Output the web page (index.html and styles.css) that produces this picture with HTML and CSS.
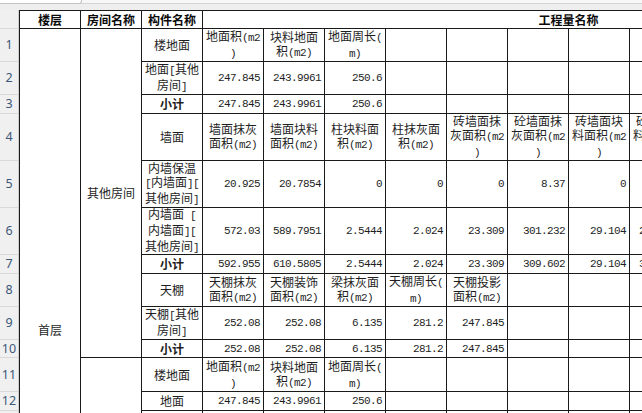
FILE: index.html
```html
<!DOCTYPE html>
<html lang="zh-CN">
<head>
<meta charset="utf-8">
<title>工程量表</title>
<link rel="stylesheet" href="styles.css">
</head>
<body>
<div class="topbar"><div class="strip"><div class="namebox"></div></div></div>
<div class="main">
  <div class="rowhead">
    <div class="rh h19"></div>
    <div class="rh h33">1</div>
    <div class="rh h33">2</div>
    <div class="rh h19">3</div>
    <div class="rh h47">4</div>
    <div class="rh h47">5</div>
    <div class="rh h47">6</div>
    <div class="rh h19">7</div>
    <div class="rh h33">8</div>
    <div class="rh h33">9</div>
    <div class="rh h18">10</div>
    <div class="rh h34">11</div>
    <div class="rh h19">12</div>
    <div class="rh h33"></div>
  </div>
  <div class="sheet">
    <div class="c hd">楼层</div>
    <div class="c hd">房间名称</div>
    <div class="c hd">构件名称</div>
    <div class="c hd span">工程量名称</div>

    <div class="c floor"><p>首层</p></div>
    <div class="c room"><p>其他房间</p></div>
    <div class="c room2"></div>

    <!-- row 1 -->
    <div class="c"><p>楼地面</p></div>
    <div class="c"><p>地面积<span class="a">(m2</span><br><span class="a">)</span></p></div>
    <div class="c"><p>块料地面<br>积<span class="a">(m2)</span></p></div>
    <div class="c"><p>地面周长<span class="a">(</span><br><span class="a">m)</span></p></div>
    <div class="c"></div><div class="c"></div><div class="c"></div><div class="c"></div><div class="c"></div><div class="c"></div>

    <!-- row 2 -->
    <div class="c"><p>地面<span class="a">[</span>其他<br>房间<span class="a">]</span></p></div>
    <div class="c n">247.845</div>
    <div class="c n">243.9961</div>
    <div class="c n">250.6</div>
    <div class="c"></div><div class="c"></div><div class="c"></div><div class="c"></div><div class="c"></div><div class="c"></div>

    <!-- row 3 -->
    <div class="c b"><p>小计</p></div>
    <div class="c n">247.845</div>
    <div class="c n">243.9961</div>
    <div class="c n">250.6</div>
    <div class="c"></div><div class="c"></div><div class="c"></div><div class="c"></div><div class="c"></div><div class="c"></div>

    <!-- row 4 -->
    <div class="c"><p>墙面</p></div>
    <div class="c"><p>墙面抹灰<br>面积<span class="a">(m2)</span></p></div>
    <div class="c"><p>墙面块料<br>面积<span class="a">(m2)</span></p></div>
    <div class="c"><p>柱块料面<br>积<span class="a">(m2)</span></p></div>
    <div class="c"><p>柱抹灰面<br>积<span class="a">(m2)</span></p></div>
    <div class="c"><p>砖墙面抹<br>灰面积<span class="a">(m2</span><br><span class="a">)</span></p></div>
    <div class="c"><p>砼墙面抹<br>灰面积<span class="a">(m2</span><br><span class="a">)</span></p></div>
    <div class="c"><p>砖墙面块<br>料面积<span class="a">(m2</span><br><span class="a">)</span></p></div>
    <div class="c"><p>砼墙面块<br>料面积<span class="a">(m2</span><br><span class="a">)</span></p></div>
    <div class="c"></div>

    <!-- row 5 -->
    <div class="c"><p>内墙保温<br><span class="a">[</span>内墙面<span class="a">][</span><br>其他房间<span class="a">]</span></p></div>
    <div class="c n">20.925</div>
    <div class="c n">20.7854</div>
    <div class="c n">0</div>
    <div class="c n">0</div>
    <div class="c n">0</div>
    <div class="c n">8.37</div>
    <div class="c n">0</div>
    <div class="c n">31.0442</div>
    <div class="c"></div>

    <!-- row 6 -->
    <div class="c"><p>内墙面<span class="a"> [</span><br>内墙面<span class="a">][</span><br>其他房间<span class="a">]</span></p></div>
    <div class="c n">572.03</div>
    <div class="c n">589.7951</div>
    <div class="c n">2.5444</div>
    <div class="c n">2.024</div>
    <div class="c n">23.309</div>
    <div class="c n">301.232</div>
    <div class="c n">29.104</div>
    <div class="c n">279.5135</div>
    <div class="c"></div>

    <!-- row 7 -->
    <div class="c b"><p>小计</p></div>
    <div class="c n">592.955</div>
    <div class="c n">610.5805</div>
    <div class="c n">2.5444</div>
    <div class="c n">2.024</div>
    <div class="c n">23.309</div>
    <div class="c n">309.602</div>
    <div class="c n">29.104</div>
    <div class="c n">310.5577</div>
    <div class="c"></div>

    <!-- row 8 -->
    <div class="c"><p>天棚</p></div>
    <div class="c"><p>天棚抹灰<br>面积<span class="a">(m2)</span></p></div>
    <div class="c"><p>天棚装饰<br>面积<span class="a">(m2)</span></p></div>
    <div class="c"><p>梁抹灰面<br>积<span class="a">(m2)</span></p></div>
    <div class="c"><p>天棚周长<span class="a">(</span><br><span class="a">m)</span></p></div>
    <div class="c"><p>天棚投影<br>面积<span class="a">(m2)</span></p></div>
    <div class="c"></div><div class="c"></div><div class="c"></div><div class="c"></div>

    <!-- row 9 -->
    <div class="c"><p>天棚<span class="a">[</span>其他<br>房间<span class="a">]</span></p></div>
    <div class="c n">252.08</div>
    <div class="c n">252.08</div>
    <div class="c n">6.135</div>
    <div class="c n">281.2</div>
    <div class="c n">247.845</div>
    <div class="c"></div><div class="c"></div><div class="c"></div><div class="c"></div>

    <!-- row 10 -->
    <div class="c b"><p>小计</p></div>
    <div class="c n">252.08</div>
    <div class="c n">252.08</div>
    <div class="c n">6.135</div>
    <div class="c n">281.2</div>
    <div class="c n">247.845</div>
    <div class="c"></div><div class="c"></div><div class="c"></div><div class="c"></div>

    <!-- row 11 -->
    <div class="c"><p>楼地面</p></div>
    <div class="c"><p>地面积<span class="a">(m2</span><br><span class="a">)</span></p></div>
    <div class="c"><p>块料地面<br>积<span class="a">(m2)</span></p></div>
    <div class="c"><p>地面周长<span class="a">(</span><br><span class="a">m)</span></p></div>
    <div class="c"></div><div class="c"></div><div class="c"></div><div class="c"></div><div class="c"></div><div class="c"></div>

    <!-- row 12 -->
    <div class="c"><p>地面</p></div>
    <div class="c n">247.845</div>
    <div class="c n">243.9961</div>
    <div class="c n">250.6</div>
    <div class="c"></div><div class="c"></div><div class="c"></div><div class="c"></div><div class="c"></div><div class="c"></div>

    <!-- row 13 -->
    <div class="c"></div>
    <div class="c"></div>
    <div class="c"></div>
    <div class="c"></div>
    <div class="c"></div><div class="c"></div><div class="c"></div><div class="c"></div><div class="c"></div><div class="c"></div>
  </div>
</div>
</body>
</html>
```

FILE: styles.css
```css
html, body {
  margin: 0;
  padding: 0;
}
body {
  width: 642px;
  height: 413px;
  overflow: hidden;
  background: #ffffff;
  font-family: "Noto Sans CJK SC", "Noto Sans", sans-serif;
}

.topbar {
  height: 10px;
  background: #eeeeee;
}
.strip {
  height: 3px;
  background: #f7f7f7;
  border-bottom: 1px solid #d4d4d4;
  display: flex;
}
.namebox {
  width: 81px;
  height: 3px;
  background: #ffffff;
  border-right: 1px solid #c4c4c4;
  border-bottom: 1px solid #c4c4c4;
  border-bottom-right-radius: 3px;
}

.main {
  display: flex;
}

.rowhead {
  width: 18px;
  flex: none;
  background: #f0f0f0;
  border-right: 1px solid #d0d0d0;
  display: flex;
  flex-direction: column;
}
.rh {
  box-sizing: border-box;
  flex: none;
  display: flex;
  align-items: center;
  justify-content: center;
  border-bottom: 1px solid #d9d9d9;
  color: #3d5878;
  font-family: "Noto Sans", sans-serif;
  font-size: 12.5px;
  line-height: 14px;
}
.h18 { height: 18px; }
.h19 { height: 19px; }
.h33 { height: 33px; }
.h34 { height: 34px; }
.h47 { height: 47px; }

.sheet {
  flex: none;
  display: grid;
  grid-template-columns: repeat(11, 60px) 243px;
  grid-template-rows: 17px 32px 32px 18px 46px 46px 46px 18px 32px 32px 17px 33px 18px 32px;
  gap: 1px;
  padding: 1px;
  background: #1a1a1a;
}

.c {
  background: #ffffff;
  display: flex;
  align-items: center;
  justify-content: center;
  text-align: center;
  font-size: 12px;
  line-height: 14px;
  color: #1e1e1e;
  white-space: nowrap;
}
.c p {
  margin: 0;
}
.a {
  font-family: "Liberation Mono", monospace;
  font-size: 11px;
  letter-spacing: -0.6px;
}
.n {
  justify-content: flex-end;
  padding-right: 3px;
  font-family: "Liberation Mono", monospace;
  font-size: 11px;
  letter-spacing: -0.6px;
}
.b {
  font-weight: 700;
}
.hd {
  font-weight: 700;
  color: #0a0a0a;
}
.span {
  grid-column: 4 / -1;
}
.floor {
  grid-column: 1;
  grid-row: 2 / span 13;
  align-items: flex-start;
  padding-top: 294px;
}
.room {
  grid-column: 2;
  grid-row: 2 / span 10;
}
.room2 {
  grid-column: 2;
  grid-row: 12 / span 3;
}
```
